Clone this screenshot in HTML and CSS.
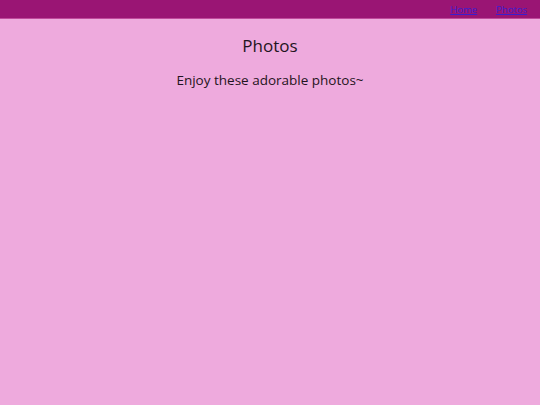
FILE: index.html
```html
<!DOCTYPE html>
<html>
<head>
<meta charset="utf-8">
<link rel="stylesheet" href="styles.css">
</head>
<body>
<nav class="topbar">
  <a class="navlink" href="#">Home</a>
  <a class="navlink" href="#">Photos</a>
</nav>
<main class="content">
  <h1 class="title">Photos</h1>
  <p class="intro">Enjoy these adorable photos~</p>
</main>
</body>
</html>
```
FILE: styles.css
```css
html, body {
  margin: 0;
  padding: 0;
}
body {
  background: #eeaadd;
  font-family: "Open Sans", "Liberation Sans", sans-serif;
  color: #1f1420;
  width: 540px;
  height: 405px;
}
.topbar {
  height: 18px;
  background: #9a1574;
  border-bottom: 1px solid #c04a9c;
  display: flex;
  justify-content: flex-end;
  align-items: center;
  gap: 19px;
  padding-right: 13px;
  box-sizing: content-box;
}
.navlink {
  color: #3a1ed0;
  font-size: 9.5px;
  text-decoration: underline;
}
.content {
  text-align: center;
}
.title {
  margin: 15px 0 0;
  font-size: 17px;
  font-weight: 500;
  line-height: 24px;
}
.intro {
  margin: 12px 0 0;
  font-size: 13.5px;
  line-height: 20px;
}
```
